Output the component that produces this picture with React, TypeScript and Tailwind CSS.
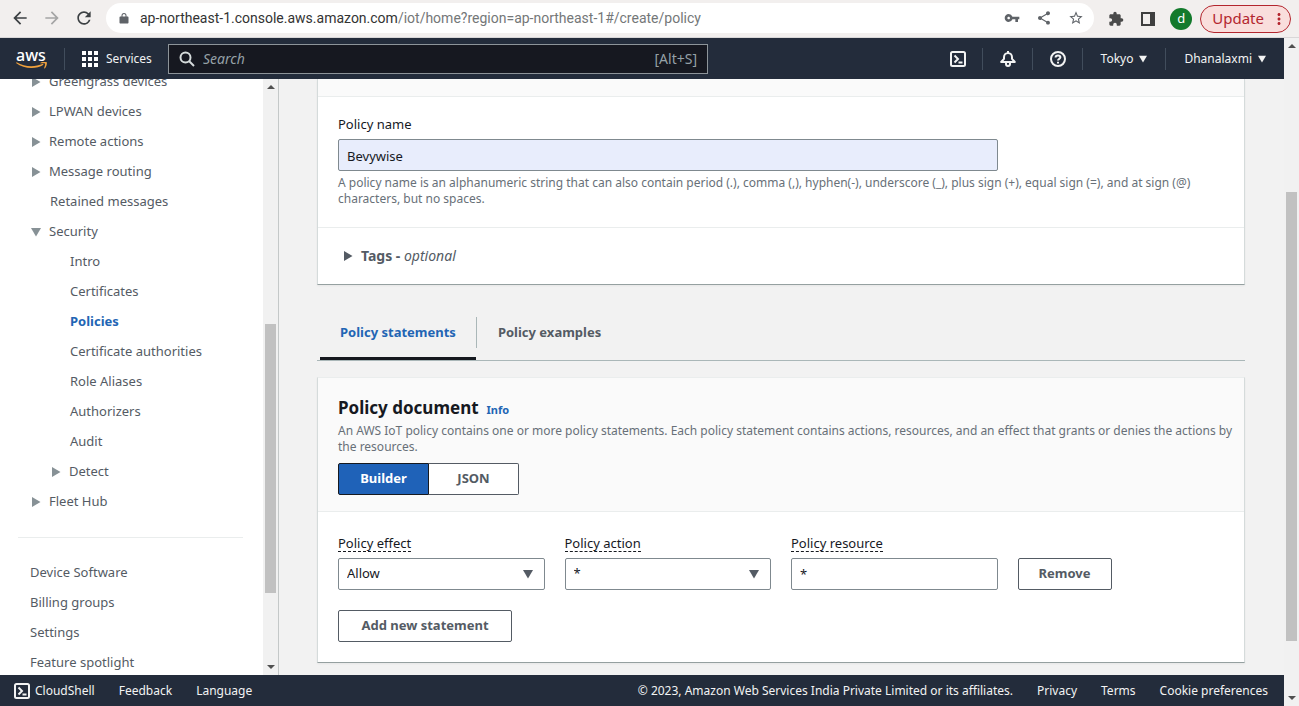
import { ReactNode } from 'react';
import {
    MdArrowBack,
    MdArrowForward,
    MdMoreVert,
    MdRefresh,
    MdStarBorder,
    MdVpnKey,
} from 'react-icons/md';

const Triangle = ({ open = false, className = 'size-2.5' }: { open?: boolean; className?: string }) => (
    <svg viewBox="0 0 10 10" className={`shrink-0 fill-current ${className}`} aria-hidden="true">
        <path d={open ? 'M0 1h10L5 9.5z' : 'M1 0v10l8.5-5z'} />
    </svg>
);

const SolidIcon = ({ d, className = 'size-4' }: { d: string; className?: string }) => (
    <svg viewBox="0 0 24 24" className={`shrink-0 fill-current ${className}`} aria-hidden="true">
        <path d={d} />
    </svg>
);

const lockPath = 'M19 9h-2V7A5 5 0 0 0 7 7v2H5c-1.100 0-2 .9-2 2v10c0 1.100.9 2 2 2h14c1.100 0 2-.9 2-2V11c0-1.100-.9-2-2-2zM9 9V7a3 3 0 0 1 6 0v2z';
const sharePath = 'M18 16.080c-.76 0-1.440.3-1.960.770L8.910 12.700c.05-.23.09-.46.09-.7s-.04-.47-.09-.7l7.050-4.110c.54.5 1.250.81 2.040.81 1.660 0 3-1.340 3-3s-1.340-3-3-3-3 1.340-3 3c0 .24.04.47.09.7L8.040 9.810C7.500 9.310 6.790 9 6 9c-1.660 0-3 1.340-3 3s1.340 3 3 3c.79 0 1.500-.31 2.040-.81l7.120 4.160c-.05.21-.08.43-.08.65 0 1.610 1.310 2.920 2.920 2.920s2.920-1.310 2.920-2.920-1.310-2.920-2.920-2.920z';
const puzzlePath = 'M20.500 11H19V7c0-1.100-.9-2-2-2h-4V3.500a2.500 2.500 0 0 0-5 0V5H4c-1.100 0-2 .9-2 2v3.800h1.500a2.700 2.700 0 0 1 0 5.400H2V20c0 1.100.9 2 2 2h3.800v-1.500a2.700 2.700 0 0 1 5.400 0V22H17c1.100 0 2-.9 2-2v-4h1.500a2.500 2.500 0 0 0 0-5z';

const ShellIcon = () => (
    <svg viewBox="0 0 16 16" className="size-4 shrink-0" fill="none" stroke="currentColor" strokeWidth="2" aria-hidden="true">
        <rect x="1" y="1" width="14" height="14" rx="1.5" />
        <path d="M4.500 4.500L8 8l-3.500 3.500M8.500 11.500H12.500" />
    </svg>
);

const BellIcon = () => (
    <svg viewBox="0 0 16 16" className="size-4" fill="none" stroke="currentColor" strokeWidth="2" strokeLinejoin="round" aria-hidden="true">
        <path d="M8 0v2M1.200 11h13.600L12 7.800V6.200C12 3.800 10.300 2 8 2S4 3.800 4 6.200v1.600z" />
        <path d="M6 11.500v1.600c0 1.100.8 1.900 2 1.900s2-.8 2-1.900v-1.600" />
    </svg>
);

const HelpIcon = () => (
    <svg viewBox="0 0 16 16" className="size-4" fill="none" stroke="currentColor" strokeWidth="2" aria-hidden="true">
        <circle cx="8" cy="8" r="7" />
        <path d="M5.600 6.400C5.600 4.900 6.600 4.400 8 4.400s2.400.7 2.400 1.900c0 1.700-2.400 1.500-2.400 3.300M8 10.700v1.700" />
    </svg>
);

const GridIcon = () => (
    <svg viewBox="0 0 16 16" className="size-4 fill-white" aria-hidden="true">
        {[0, 6, 12].map((y) => [0, 6, 12].map((x) => <rect key={`${x}-${y}`} x={x} y={y} width="4" height="4" />))}
    </svg>
);

const BrowserBar = () => (
    <div className="flex h-[38px] shrink-0 items-center border-b border-[#d9d7d8] bg-[#f2efee] pb-px text-[#5f6368]">
        <div className="flex w-[106px] shrink-0 items-center gap-3 pl-2.5">
            <button aria-label="Back" className="text-[#3c4043]"><MdArrowBack className="size-5" /></button>
            <button aria-label="Forward" className="text-[#a5a5a5]"><MdArrowForward className="size-5" /></button>
            <button aria-label="Reload" className="text-[#3c4043]"><MdRefresh className="size-5" /></button>
        </div>
        <div className="flex h-[30px] min-w-0 flex-1 items-center rounded-full bg-white pl-3 pr-2.5">
            <SolidIcon d={lockPath} className="size-3" />
            <p className="ml-2.5 flex-1 truncate font-['Roboto',sans-serif] text-sm text-[#747778]">
                <span className="text-[#333]">ap-northeast-1.console.aws.amazon.com</span>/iot/home?region=ap-northeast-1#/create/policy
            </p>
            <div className="flex items-center gap-4">
                <button aria-label="Passwords"><MdVpnKey className="size-4" /></button>
                <button aria-label="Share"><SolidIcon d={sharePath} /></button>
                <button aria-label="Bookmark"><MdStarBorder className="size-4" /></button>
            </div>
        </div>
        <div className="flex shrink-0 items-center pl-3.5 pr-2 pt-px">
            <button aria-label="Extensions" className="text-[#4a4a4a]"><SolidIcon d={puzzlePath} /></button>
            <button aria-label="Side panel" className="ml-4 text-[#3f3f3f]">
                <svg viewBox="0 0 16 16" className="size-4 fill-current"><path d="M1 1h14v14H1zM3 3v10h7V3z" fillRule="evenodd" /></svg>
            </button>
            <button aria-label="Profile" className="ml-3.5 size-[22px] rounded-full bg-[#137a2c] text-[13px] leading-none text-white">d</button>
            <button className="ml-2 flex h-7 items-center gap-1.5 rounded-full border border-[#b3262e] bg-[#f9dedc] pl-[11px] pr-0.5 text-[15px] text-[#b3262e]">
                Update <MdMoreVert className="size-[18px]" />
            </button>
        </div>
    </div>
);

const HeaderItem = ({ children, className = '' }: { children: ReactNode; className?: string }) => (
    <div className={`flex h-[22px] items-center border-[#414d5c] ${className}`}>{children}</div>
);

const Header = () => (
    <header className="flex h-[41px] shrink-0 items-center bg-[#232c3b] text-xs text-[#f2f3f3]">
        <a href="#home" aria-label="AWS home" className="flex w-[65px] shrink-0 flex-col border-r border-[#414d5c] pl-4 text-white">
            <span className="text-base font-medium leading-[14px]">aws</span>
            <svg viewBox="0 0 32 8" className="h-2 w-8" fill="#f0a13c" aria-hidden="true">
                <path d="M0 1c8 6 20 6.500 27.500 1.700l-.6-1C19 5.200 9 5.200.6.200z" />
                <path d="M24.500.7c2-1.200 5.600-1.300 6.200-.5.600.9-.2 4.600-2 6.300l-.7-.3c.7-1.700 1.400-4 1-4.600-.5-.6-3-.4-4.500-.2z" />
            </svg>
        </a>
        <button className="flex w-[103px] shrink-0 items-center gap-2 pl-[17px]">
            <GridIcon /> Services
        </button>
        <label className="flex h-[30px] w-[540px] min-w-0 items-center border border-[#8d9499] bg-[#161820] px-2.5">
            <svg viewBox="0 0 16 16" className="size-4 shrink-0" fill="none" stroke="#d5dbdb" strokeWidth="2">
                <circle cx="6.500" cy="6.500" r="5" />
                <path d="M10 10l5 5" />
            </svg>
            <input
                type="search"
                aria-label="Search"
                placeholder="Search"
                className="ml-2 min-w-0 flex-1 bg-transparent text-sm italic outline-none placeholder:text-[#95a0a6]"
            />
            <span className="text-sm text-[#95a0a6]">[Alt+S]</span>
        </label>
        <div className="ml-auto flex shrink-0 items-center">
            <HeaderItem className="border-r pr-4"><button aria-label="CloudShell"><ShellIcon /></button></HeaderItem>
            <HeaderItem className="border-r pl-[17px] pr-4"><button aria-label="Notifications"><BellIcon /></button></HeaderItem>
            <HeaderItem className="border-r pl-[17px] pr-4"><button aria-label="Help"><HelpIcon /></button></HeaderItem>
            <HeaderItem className="border-r px-[18px]">
                <button className="flex items-center gap-1.5">Tokyo <Triangle open className="size-2" /></button>
            </HeaderItem>
            <HeaderItem className="px-[18px]">
                <button className="flex items-center gap-1.5">Dhanalaxmi <Triangle open className="size-2" /></button>
            </HeaderItem>
        </div>
    </header>
);

type NavEntry = { label: string; indent: string; toggle?: 'open' | 'closed'; active?: boolean };

const navEntries: NavEntry[] = [
    { label: 'Greengrass devices', indent: 'pl-[31px]', toggle: 'closed' },
    { label: 'LPWAN devices', indent: 'pl-[31px]', toggle: 'closed' },
    { label: 'Remote actions', indent: 'pl-[31px]', toggle: 'closed' },
    { label: 'Message routing', indent: 'pl-[31px]', toggle: 'closed' },
    { label: 'Retained messages', indent: 'pl-[50px]' },
    { label: 'Security', indent: 'pl-[31px]', toggle: 'open' },
    { label: 'Intro', indent: 'pl-[70px]' },
    { label: 'Certificates', indent: 'pl-[70px]' },
    { label: 'Policies', indent: 'pl-[70px]', active: true },
    { label: 'Certificate authorities', indent: 'pl-[70px]' },
    { label: 'Role Aliases', indent: 'pl-[70px]' },
    { label: 'Authorizers', indent: 'pl-[70px]' },
    { label: 'Audit', indent: 'pl-[70px]' },
    { label: 'Detect', indent: 'pl-[51px]', toggle: 'closed' },
    { label: 'Fleet Hub', indent: 'pl-[31px]', toggle: 'closed' },
];

const footerEntries: NavEntry[] = ['Device Software', 'Billing groups', 'Settings', 'Feature spotlight'].map((label) => ({
    label,
    indent: 'pl-[30px]',
}));

const NavRow = ({ label, indent, toggle, active }: NavEntry) => (
    <li className={`flex h-[30px] items-center ${indent}`}>
        {toggle && (
            <button aria-label={`Toggle ${label}`} className="mr-2 text-[#879196]">
                <Triangle open={toggle === 'open'} />
            </button>
        )}
        <a href="#nav" className={active ? 'font-bold text-[#2265b4]' : ''}>{label}</a>
    </li>
);

const Scrollbar = ({ before, thumb, after }: { before: string; thumb: string; after: string }) => (
    <div className="flex w-[15px] shrink-0 flex-col items-center bg-[#f1f1f1] py-1.5 text-[#505050]" aria-hidden="true">
        <svg viewBox="0 0 8 4" className="h-1 w-2 shrink-0 fill-current"><path d="M0 4h8L4 0z" /></svg>
        <div className={before} />
        <div className={`w-[11px] bg-[#c1c1c1] ${thumb}`} />
        <div className={after} />
        <svg viewBox="0 0 8 4" className="h-1 w-2 shrink-0 fill-current"><path d="M0 0h8L4 4z" /></svg>
    </div>
);

const Sidebar = () => (
    <aside className="flex w-[279px] shrink-0 border-r border-[#c4c8c8] bg-white text-[#545b64]">
        <nav className="min-w-0 flex-1 overflow-hidden">
            <ul className="-mt-3">
                {navEntries.map((entry) => <NavRow key={entry.label} {...entry} />)}
            </ul>
            <hr className="mb-5 ml-[18px] mr-5 mt-5 border-[#eaeded]" />
            <ul>
                {footerEntries.map((entry) => <NavRow key={entry.label} {...entry} />)}
            </ul>
        </nav>
        <Scrollbar before="grow-[235]" thumb="grow-[269]" after="grow-[72]" />
    </aside>
);

const Hint = ({ children, className = '' }: { children: ReactNode; className?: string }) => (
    <p className={`text-xs leading-4 text-[#687078] ${className}`}>{children}</p>
);

const FieldLabel = ({ htmlFor, children }: { htmlFor: string; children: ReactNode }) => (
    <label htmlFor={htmlFor} className="mb-1.5 inline-block border-b border-dashed border-[#16191f] leading-4">
        {children}
    </label>
);

const SelectBox = ({ id, value }: { id: string; value: string }) => (
    <div className="relative">
        <select id={id} defaultValue={value} className="h-8 w-full appearance-none rounded-xs border border-[#7f898f] bg-white px-2">
            <option>{value}</option>
        </select>
        <Triangle open className="pointer-events-none absolute right-3 top-[11px] size-2.5 text-[#545b64]" />
    </div>
);

const ActionButton = ({ children, className = '' }: { children: ReactNode; className?: string }) => (
    <button className={`h-8 rounded-xs border border-[#545b64] bg-white px-5 font-bold text-[#545b64] ${className}`}>{children}</button>
);

const PolicyDetails = () => (
    <section className="border border-t-0 border-[#d5dbdb] border-b-[#95a0a0] bg-white shadow-xs">
        <div className="h-[18px] border-b border-[#eaeded] bg-[#fafafa]" />
        <div className="px-5 pb-5 pt-[17px]">
            <label htmlFor="policy-name" className="block leading-5">Policy name</label>
            <input
                id="policy-name"
                defaultValue="Bevywise"
                className="mt-[5px] h-8 w-full max-w-[660px] rounded-xs border border-[#7f898f] bg-[#e8edfc] px-2 pt-0.5"
            />
            <Hint className="mt-1">
                A policy name is an alphanumeric string that can also contain period (.), comma (,), hyphen(-), underscore (_), plus sign (+), equal sign (=), and at sign (@) characters, but no spaces.
            </Hint>
        </div>
        <div className="border-t border-[#eaeded] px-[25px] py-[18px] text-[#545b64]">
            <button className="flex items-center gap-2 text-sm leading-5">
                <Triangle />
                <span><b>Tags -</b> <i>optional</i></span>
            </button>
        </div>
    </section>
);

const Tabs = () => (
    <div role="tablist" className="mt-8 flex h-11 border-b border-[#aab7b8] pl-[3px] font-bold text-[#545b64]">
        <button role="tab" aria-selected="true" className="border-b-3 border-[#16191f] px-5 pb-2 text-[#2265b4]">
            Policy statements
        </button>
        <button role="tab" aria-selected="false" className="mb-3 border-l border-[#aab7b8] px-[21px]">
            Policy examples
        </button>
    </div>
);

const PolicyDocument = () => (
    <section className="mt-4 border border-[#d5dbdb] border-t-[#eaeded] border-b-[#95a0a0] bg-white shadow-xs">
        <div className="border-b border-[#eaeded] bg-[#fafafa] px-5 pb-4 pt-[18px]">
            <div className="flex h-[25px] items-baseline gap-2">
                <h2 className="text-[17px] font-bold leading-6 text-[#16191f]">Policy document</h2>
                <a href="#info" className="text-[11px] font-bold text-[#2265b4]">Info</a>
            </div>
            <Hint className="-mr-3 mb-2 mt-0.5">
                An AWS IoT policy contains one or more policy statements. Each policy statement contains actions, resources, and an effect that grants or denies the actions by the resources.
            </Hint>
            <div className="flex font-bold">
                <button aria-pressed="true" className="h-8 w-[91px] rounded-l-xs border border-[#16191f] bg-[#1f62b8] text-white">Builder</button>
                <button aria-pressed="false" className="h-8 w-[90px] rounded-r-xs border border-l-0 border-[#545b64] bg-white text-[#545b64]">JSON</button>
            </div>
        </div>
        <div className="px-5 pb-5 pt-[22px]">
            <div className="grid grid-cols-4 items-end gap-5">
                <div>
                    <FieldLabel htmlFor="effect">Policy effect</FieldLabel>
                    <SelectBox id="effect" value="Allow" />
                </div>
                <div>
                    <FieldLabel htmlFor="action">Policy action</FieldLabel>
                    <SelectBox id="action" value="*" />
                </div>
                <div>
                    <FieldLabel htmlFor="resource">Policy resource</FieldLabel>
                    <input id="resource" defaultValue="*" className="block h-8 w-full rounded-xs border border-[#7f898f] bg-white px-2" />
                </div>
                <div><ActionButton>Remove</ActionButton></div>
            </div>
            <div className="mt-5"><ActionButton className="min-w-[174px]">Add new statement</ActionButton></div>
        </div>
    </section>
);

const Footer = () => (
    <footer className="flex h-[31px] shrink-0 items-center justify-between bg-[#232c3b] pl-3.5 pr-4 text-xs text-[#f2f3f3]">
        <div className="flex items-center gap-6">
            <a href="#cloudshell" className="flex items-center gap-[5px]"><ShellIcon /> CloudShell</a>
            <a href="#feedback">Feedback</a>
            <a href="#language">Language</a>
        </div>
        <div className="flex items-center gap-6">
            <span>© 2023, Amazon Web Services India Private Limited or its affiliates.</span>
            <a href="#privacy">Privacy</a>
            <a href="#terms">Terms</a>
            <a href="#cookies">Cookie preferences</a>
        </div>
    </footer>
);

export default function App() {
    return (
        <div className="flex h-screen flex-col overflow-hidden bg-[#f2f2f2] font-['Noto_Sans',sans-serif] text-[13px] text-[#16191f]">
            <BrowserBar />
            <div className="flex min-h-0 flex-1">
                <div className="flex min-w-0 flex-1 flex-col">
                    <Header />
                    <div className="flex min-h-0 flex-1">
                        <Sidebar />
                        <main className="min-w-0 flex-1 overflow-hidden pl-[38px] pr-[39px]">
                            <PolicyDetails />
                            <Tabs />
                            <PolicyDocument />
                        </main>
                    </div>
                    <Footer />
                </div>
                <Scrollbar before="grow-[144]" thumb="grow-[449]" after="grow-[55]" />
            </div>
        </div>
    );
}
